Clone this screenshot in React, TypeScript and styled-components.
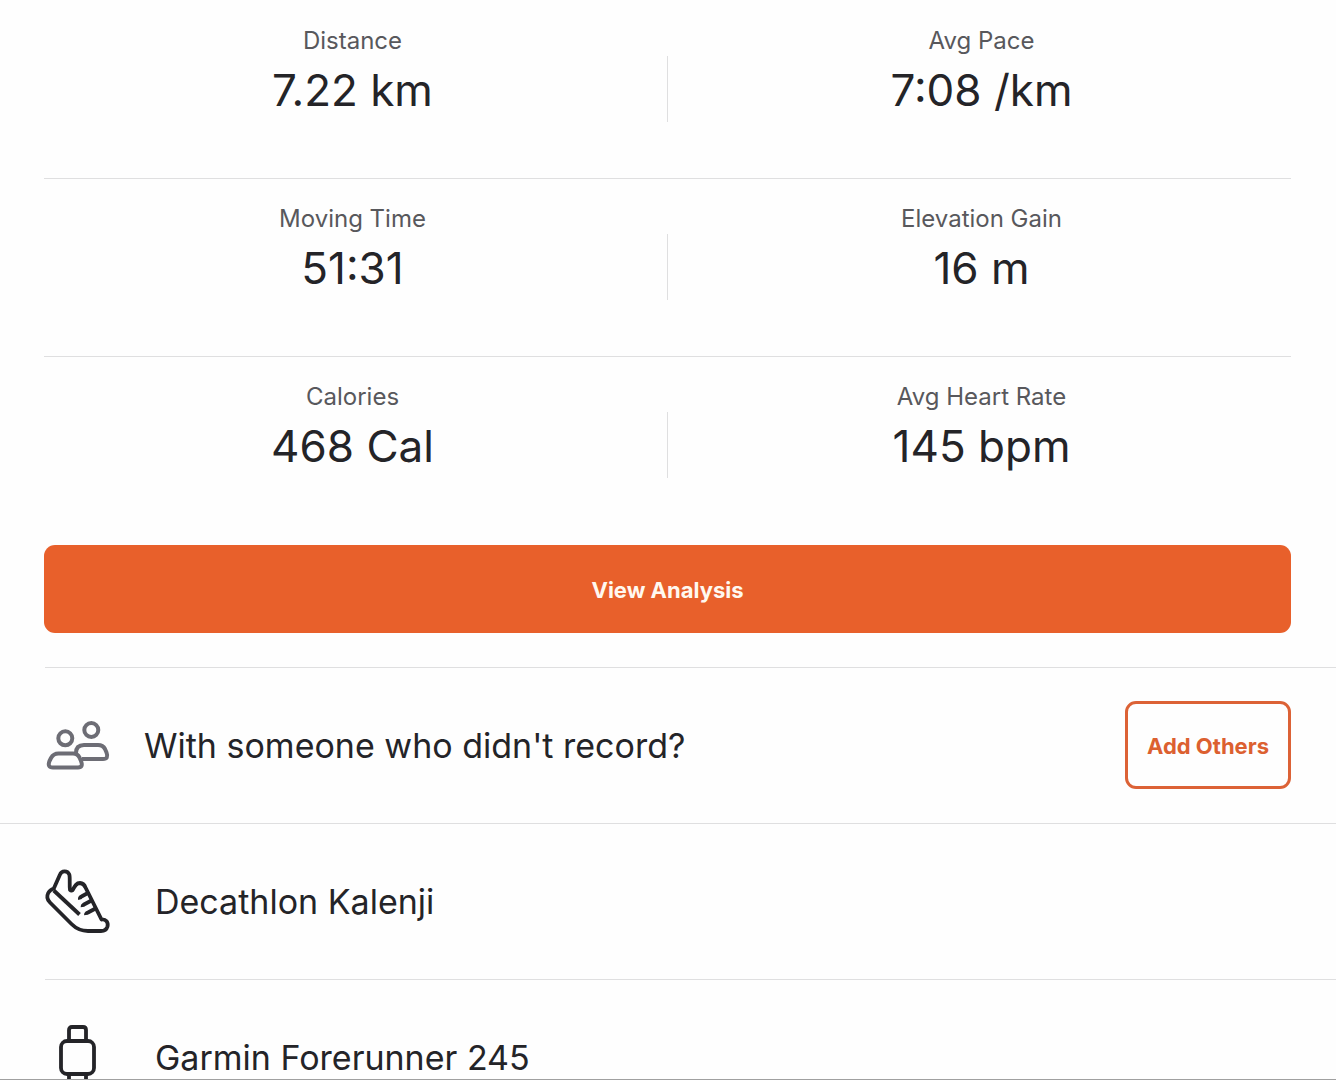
import React from "react";
import styled, { createGlobalStyle } from "styled-components";

const GlobalStyle = createGlobalStyle`
  *, *::before, *::after { box-sizing: border-box; }
  body { margin: 0; background: #fefefe; }
  body, button { font-family: Inter, Roboto, "Liberation Sans", sans-serif; }
`;

const Page = styled.main`
  height: 100vh;
  overflow: hidden;
  padding-top: 1px;
  border-bottom: 1px solid #a0a0a0;
  background: #fefefe;
  color: #242428;
`;

const Summary = styled.section`
  padding: 0 45px 34px 44px;
`;

const StatRow = styled.dl<{ $last?: boolean }>`
  display: grid;
  grid-template-columns: 1fr 1px 1fr;
  height: 178px;
  margin: 0;
  border-bottom: 1px solid ${(p) => (p.$last ? "transparent" : "#dfdfe0")};
`;

const Stat = styled.div`
  display: flex;
  flex-direction: column;
  align-items: center;
  padding: 24px 0 0 4px;
  &:first-child { padding: 24px 6px 0 0; }
`;

const Label = styled.dt`
  font-size: 24px;
  line-height: 32px;
  font-weight: 400;
  color: #58585c;
`;

const Value = styled.dd`
  margin: 4px 0 0;
  font-size: 44px;
  line-height: 58px;
  font-weight: 400;
`;

const Separator = styled.div`
  height: 66px;
  margin-top: 55px;
  background: #dfdfe0;
`;

const Button = styled.button<{ $outline?: boolean }>`
  width: ${(p) => (p.$outline ? "166px" : "100%")};
  height: 88px;
  flex: none;
  padding: 2px 0 0;
  border: ${(p) => (p.$outline ? "3px solid #dc6236" : "0")};
  border-radius: 11px;
  background: ${(p) => (p.$outline ? "#fefefe" : "#e8602b")};
  color: ${(p) => (p.$outline ? "#dc6030" : "#fff8f0")};
  font-size: 22px;
  line-height: 32px;
  font-weight: 700;
  cursor: pointer;
`;

const Action = styled.div`
  padding-top: 10px;
`;

const ListRow = styled.div<{ $gap: number }>`
  display: flex;
  align-items: center;
  gap: ${(p) => p.$gap}px;
  height: 156px;
  padding: 0 45px 2px;
  border-top: 1px solid #dfdfe0;
`;

const InsetRow = styled(ListRow)`
  margin-left: 45px;
  padding-left: 0;
`;

const RowText = styled.span`
  flex: 1;
  padding-top: 2px;
  font-size: 34px;
  line-height: 48px;
  font-weight: 400;
`;

const Icon = styled.svg`
  flex: none;
  width: 66px;
  height: 66px;
  fill: none;
  stroke: currentColor;
  stroke-linejoin: round;
  overflow: visible;
`;

const PeopleIcon = styled(Icon)`
  color: #6d6d75;
`;

const stats = [
  [["Distance", "7.22 km"], ["Avg Pace", "7:08 /km"]],
  [["Moving Time", "51:31"], ["Elevation Gain", "16 m"]],
  [["Calories", "468 Cal"], ["Avg Heart Rate", "145 bpm"]],
];

export default function App() {
  return (
    <Page>
      <GlobalStyle />
      <Summary>
        {stats.map(([left, right], i) => (
          <StatRow key={left[0]} $last={i === stats.length - 1}>
            <Stat>
              <Label>{left[0]}</Label>
              <Value>{left[1]}</Value>
            </Stat>
            <Separator />
            <Stat>
              <Label>{right[0]}</Label>
              <Value>{right[1]}</Value>
            </Stat>
          </StatRow>
        ))}
        <Action>
          <Button type="button">View Analysis</Button>
        </Action>
      </Summary>

      <InsetRow $gap={33}>
        <PeopleIcon viewBox="0 0 66 66" strokeWidth="4" aria-hidden="true">
          <circle cx="20.3" cy="26.3" r="7" />
          <circle cx="46.3" cy="18" r="7" />
          <path d="M13.500 41.500H28C31 41.500 33 42.500 34.500 45.500L36 49Q38.500 55.500 33 55.500H8Q2 55.500 4.500 49L6 46Q8.500 41.500 13.500 41.500Z" />
          <path d="M31 41C31 35 34 33 39 33H53Q58 33 60 37L61.500 40.500Q64 47 58 47H37" />
        </PeopleIcon>
        <RowText>With someone who didn't record?</RowText>
        <Button type="button" $outline>Add Others</Button>
      </InsetRow>

      <ListRow $gap={44}>
        <Icon viewBox="0 0 66 66" strokeWidth="3.8" aria-hidden="true">
          <path d="M8.800 20.500L15 6.500C16.500 2.500 22.500 2.200 24.300 6.500C25.300 10 24.200 17 25 22C26 23 27.200 23 28 21.500C30 17.500 31.500 15 35 15C37.500 15.200 39.500 17 40.500 19.500L56.500 51.500C61 51 63.500 54.500 62.500 58.500C61.500 62 59.500 63 56 63H43C36 63 31 60.500 26.500 56L5 34.500C2 31.500 1.700 28 3.200 25C4.500 22.500 6 21.500 8.800 20.500Z" />
          <path d="M8.800 22.500L34.500 46.500" />
          <path d="M42 25.500L36.500 28.500Q34.500 29.500 35 31.500M46.500 32.500L39 36.500Q37.300 37.500 37.500 39M50.500 40.500L43 44.500Q40.800 45.500 41 47" />
        </Icon>
        <RowText>Decathlon Kalenji</RowText>
      </ListRow>

      <InsetRow $gap={44}>
        <Icon viewBox="0 0 66 66" strokeWidth="3.8" aria-hidden="true">
          <rect x="16" y="17" width="33" height="33" rx="6" />
          <path d="M24 17V6Q24 3 27 3H38Q41 3 41 6V17M24 50V60Q24 63 27 63H38Q41 63 41 60V50" />
        </Icon>
        <RowText>Garmin Forerunner 245</RowText>
      </InsetRow>
    </Page>
  );
}
